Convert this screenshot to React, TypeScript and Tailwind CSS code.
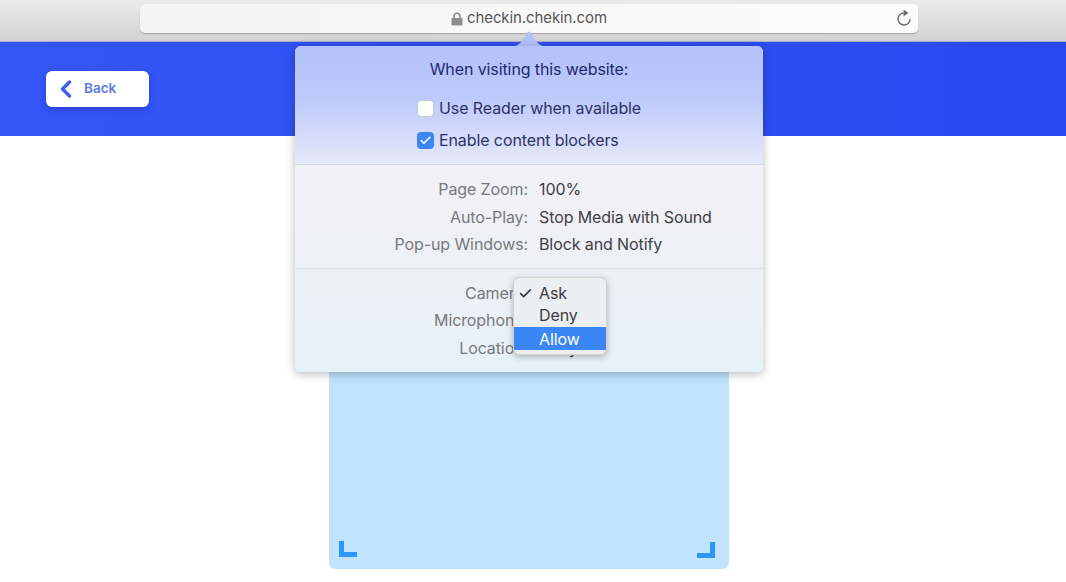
import { ChevronLeft, Check } from "lucide-react";

const settingsRows = [
  { label: "Page Zoom:", value: "100%" },
  { label: "Auto-Play:", value: "Stop Media with Sound" },
  { label: "Pop-up Windows:", value: "Block and Notify" },
];

// camera and microphone values sit fully behind the open menu
const permissionRows = [
  { label: "Camera:", value: "" },
  { label: "Microphone:", value: "" },
  { label: "Location:", value: "Deny" },
];

function Row({ label, value }: { label: string; value: string }) {
  return (
    <div className="flex h-[27.5px] items-center">
      <div className="w-[234px] pr-[1px] text-right text-[#77797e]">{label}</div>
      <div className="pl-[10px] text-[#3f4044]">{value}</div>
    </div>
  );
}

export default function App() {
  return (
    <div className="relative h-[582px] w-[1066px] overflow-hidden bg-white font-['Inter',sans-serif] text-[16px] tracking-[-0.1px]">
      {/* browser toolbar */}
      <div className="flex h-[42px] items-start justify-center border-b border-[#a9aec4] bg-gradient-to-b from-[#ebebeb] to-[#d2d2d2] pr-[8px] pt-[4px]">
        <div className="relative flex h-[29px] w-[778px] items-center justify-center rounded-[5px] bg-gradient-to-r from-[#f4f4f4] to-[#fcfcfc] shadow-[0_1px_1px_rgba(0,0,0,0.25)]">
          <div className="flex items-center gap-[4px] text-[15px] text-[#55565a]">
            <svg width="12" height="14" viewBox="0 0 12 14">
              <path d="M3 6.5V4.2a3 3 0 0 1 6 0V6.5" fill="none" stroke="#8c8c8c" strokeWidth="1.6" />
              <rect x="0.5" y="6" width="11" height="7.5" rx="1.2" fill="#8c8c8c" />
            </svg>
            <span>checkin.chekin.com</span>
          </div>
          <svg width="16" height="18" viewBox="0 0 16 18" className="absolute right-[6px] top-[5px]">
            <path d="M7.5 4A6 6 0 1 0 14 10" fill="none" stroke="#6b6c6f" strokeWidth="1.4" />
            <path d="M7.5 0.5L12.5 4L7.5 7.5Z" fill="#6b6c6f" />
          </svg>
        </div>
      </div>

      {/* blue header */}
      <div className="flex h-[94px] items-center bg-gradient-to-r from-[#3456f6] to-[#2a48f0] pl-[46px]">
        <button className="flex h-[36px] w-[103px] items-center rounded-[6px] bg-white pl-[6px] text-[13.5px] font-semibold tracking-normal text-[#5d77e6] shadow-[0_3px_6px_rgba(20,30,120,0.3)]">
          <ChevronLeft size={28} strokeWidth={3} className="text-[#3f5fe8]" />
          <span className="mb-[1px] ml-[4px]">Back</span>
        </button>
      </div>

      {/* scanner area */}
      <div className="ml-[329px] mt-[34px] flex h-[399px] w-[400px] items-end justify-between rounded-b-[6px] bg-[#c0e3fe] pb-[11px] pl-[10px] pr-[14px]">
        <div className="mb-[1px] h-[16px] w-[18px] border-b-[5px] border-l-[5px] border-[#2b96fb]" />
        <div className="h-[16px] w-[18px] border-b-[5px] border-r-[5px] border-[#2b96fb]" />
      </div>

      {/* site settings popover */}
      <svg width="40" height="17" viewBox="0 0 40 17" className="absolute left-[509px] top-[30px]">
        <path d="M0 17C8 17 11 14 15 8L18 3Q20 0 22 3L25 8C29 14 32 17 40 17Z" fill="#b4c2fb" />
      </svg>
      <div className="absolute left-[295px] top-[46px] flex h-[326px] w-[468px] flex-col rounded-[6px] bg-gradient-to-b from-[#f1f1f6] via-[#f0f0f6] via-[55%] to-[#e6f1f8] shadow-[0_2px_10px_rgba(0,0,0,0.28)]">
        <div className="flex h-[119px] flex-col rounded-t-[6px] border-b border-[#d3d6e6] bg-gradient-to-b from-[#b3c1fc] via-[#bdcafb] via-[45%] to-[#e6e9fa]">
          <div className="pt-[11px] text-center text-[#1d2a6d]">When visiting this website:</div>
          <div className="mt-[17px] flex h-[20px] items-center pl-[122px] text-[#2d3364]">
            <span className="h-[17px] w-[17px] rounded-[4px] border border-[#c5c8d8] bg-white" />
            <span className="ml-[5px]">Use Reader when available</span>
          </div>
          <div className="mt-[12px] flex h-[20px] items-center pl-[122px] text-[#2d3364]">
            <span className="flex h-[17px] w-[17px] items-center justify-center rounded-[4px] bg-[#3c85f5]">
              <Check size={13} strokeWidth={3} className="text-white" />
            </span>
            <span className="ml-[5px]">Enable content blockers</span>
          </div>
        </div>
        <div className="flex h-[104px] flex-col justify-center border-b border-[#dcdee4]">
          {settingsRows.map((row) => (
            <Row key={row.label} {...row} />
          ))}
        </div>
        <div className="flex flex-1 flex-col pt-[10px]">
          {permissionRows.map((row) => (
            <Row key={row.label} {...row} />
          ))}
        </div>
      </div>

      {/* permission dropdown */}
      <div className="absolute left-[513px] top-[277px] h-[78px] w-[94px] rounded-[6px] border border-[#cfd1d3] bg-[#eceff1] pt-[4px] text-[#3a3b3e] shadow-[0_2px_6px_rgba(0,0,0,0.25)]">
        <div className="relative flex h-[22px] items-center pl-[25px]">
          <Check size={15} strokeWidth={2.6} className="absolute left-[4px] text-[#2f3033]" />
          Ask
        </div>
        <div className="flex h-[22px] items-center pl-[25px]">Deny</div>
        <div className="mt-[1px] flex h-[23px] items-center bg-[#3b86f6] pl-[25px] text-white">Allow</div>
      </div>
    </div>
  );
}
